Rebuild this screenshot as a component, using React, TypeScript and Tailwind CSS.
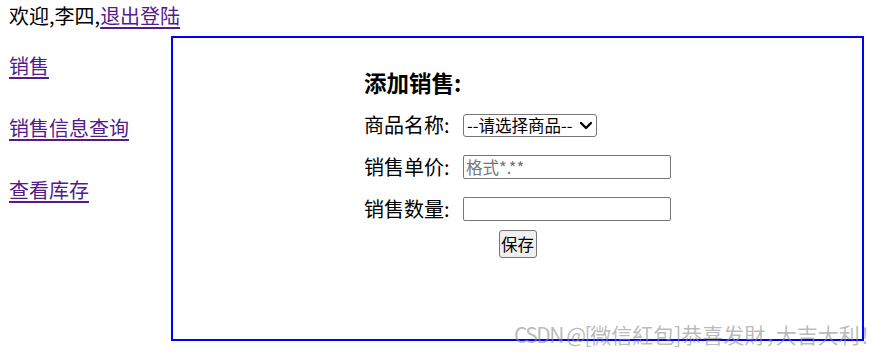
const FONT = { fontFamily: '"Noto Sans CJK SC", "Liberation Sans", sans-serif' };

const navLinks = ["销售", "销售信息查询", "查看库存"];

export default function App() {
  return (
    <div className="relative w-[882px] h-[354px] overflow-hidden bg-white text-black" style={FONT}>
      <div className="pl-[9px] pt-[6px] text-[20px] leading-[20px]">
        欢迎,李四,<a href="#" className="text-[#551a8b] underline underline-offset-[3px]">退出登陆</a>
      </div>

      <div className="flex items-start mt-[10px]">
        <nav className="w-[171px] shrink-0 pl-[9px] pt-[20px] flex flex-col items-start gap-[42px] text-[20px] leading-[20px]">
          {navLinks.map((l) => (
            <a key={l} href="#" className="text-[#551a8b] underline underline-offset-[3px]">{l}</a>
          ))}
        </nav>

        <div className="w-[693px] h-[305px] shrink-0 border-2 border-[#0000ff] flex justify-center">
          <div className="w-[307px] pt-[33px]">
            <h3 className="text-[22.5px] font-bold leading-[22px] mb-[11px]">添加销售:</h3>
            <div className="grid grid-cols-[99px_208px] auto-rows-[42px] items-center text-[20px] leading-[20px]">
              <span>商品名称:</span>
              <div className="relative w-[134px] h-[23px]">
                <select className="appearance-none w-full h-full border border-[#767676] rounded-[3px] bg-white pl-[3px] pr-[20px] text-[16.5px] leading-[20px] text-black" style={FONT}>
                  <option>--请选择商品--</option>
                </select>
                <svg className="pointer-events-none absolute right-[4px] top-[7px]" width="14" height="9" viewBox="0 0 14 9">
                  <polyline points="2,2 7,7 12,2" fill="none" stroke="#000" strokeWidth="2.4" strokeLinecap="round" strokeLinejoin="round" />
                </svg>
              </div>

              <span>销售单价:</span>
              <input
                placeholder="格式*.**"
                className="w-[208px] h-[24px] border border-[#767676] rounded-[2px] px-[2px] text-[16.5px] placeholder:text-[#757575]"
                style={FONT}
              />

              <span>销售数量:</span>
              <input className="w-[208px] h-[24px] border border-[#767676] rounded-[2px] px-[2px] text-[16.5px]" style={FONT} />

              <div className="col-span-2 justify-self-center self-start">
                <button className="w-[38px] h-[28px] bg-[#efefef] border border-[#767676] rounded-[3px] text-[16.5px] leading-[20px] text-black" style={FONT}>
                  保存
                </button>
              </div>
            </div>
          </div>
        </div>
      </div>

      <div className="absolute left-[514px] top-[324px] whitespace-nowrap text-[21px] leading-[21px] text-[#8c8c8c]/60 [font-feature-settings:'halt']">
        <span className="tracking-[-1.5px]">CSDN @[</span>微信紅包]恭喜发財，大吉大利！
      </div>
    </div>
  );
}
